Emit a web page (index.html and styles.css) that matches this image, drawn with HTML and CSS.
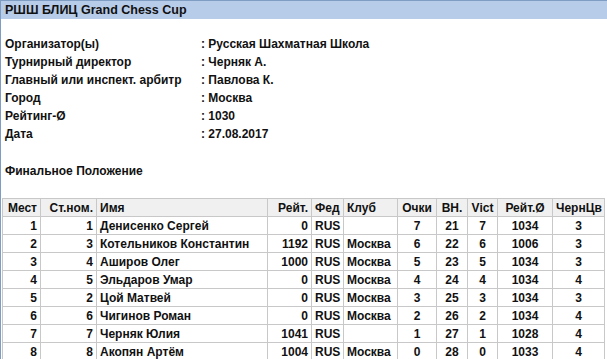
FILE: index.html
```html
<!DOCTYPE html>
<html lang="ru">
<head>
<meta charset="utf-8">
<link rel="stylesheet" href="styles.css">
</head>
<body>
<div class="page">
  <div class="titlebar">РШШ БЛИЦ Grand Chess Cup</div>
  <div class="info">
    <div class="lbl">Организатор(ы)</div><div class="val">: Русская Шахматная Школа</div>
    <div class="lbl">Турнирный директор</div><div class="val">: Черняк А.</div>
    <div class="lbl">Главный или инспект. арбитр</div><div class="val">: Павлова К.</div>
    <div class="lbl">Город</div><div class="val">: Москва</div>
    <div class="lbl">Рейтинг-Ø</div><div class="val">: 1030</div>
    <div class="lbl">Дата</div><div class="val">: 27.08.2017</div>
  </div>
  <div class="section">Финальное Положение</div>
  <table class="standings">
    <colgroup>
      <col class="c1"><col class="c2"><col class="c3"><col class="c4"><col class="c5"><col class="c6"><col class="c7"><col class="c8"><col class="c9"><col class="c10"><col class="c11">
    </colgroup>
    <thead>
      <tr><th class="r">Мест</th><th class="r">Ст.ном.</th><th class="l">Имя</th><th class="r">Рейт.</th><th class="l">Фед</th><th class="l">Клуб</th><th class="c">Очки</th><th class="c">ВН.</th><th class="c">Vict</th><th class="c">Рейт.Ø</th><th class="c">ЧернЦв</th></tr>
    </thead>
    <tbody>
      <tr><td class="r">1</td><td class="r">1</td><td class="l">Денисенко Сергей</td><td class="r">0</td><td class="l">RUS</td><td class="l"></td><td class="c">7</td><td class="c">21</td><td class="c">7</td><td class="c">1034</td><td class="c">3</td></tr>
      <tr><td class="r">2</td><td class="r">3</td><td class="l">Котельников Константин</td><td class="r">1192</td><td class="l">RUS</td><td class="l">Москва</td><td class="c">6</td><td class="c">22</td><td class="c">6</td><td class="c">1006</td><td class="c">3</td></tr>
      <tr><td class="r">3</td><td class="r">4</td><td class="l">Аширов Олег</td><td class="r">1000</td><td class="l">RUS</td><td class="l">Москва</td><td class="c">5</td><td class="c">23</td><td class="c">5</td><td class="c">1034</td><td class="c">3</td></tr>
      <tr><td class="r">4</td><td class="r">5</td><td class="l">Эльдаров Умар</td><td class="r">0</td><td class="l">RUS</td><td class="l">Москва</td><td class="c">4</td><td class="c">24</td><td class="c">4</td><td class="c">1034</td><td class="c">4</td></tr>
      <tr><td class="r">5</td><td class="r">2</td><td class="l">Цой Матвей</td><td class="r">0</td><td class="l">RUS</td><td class="l">Москва</td><td class="c">3</td><td class="c">25</td><td class="c">3</td><td class="c">1034</td><td class="c">3</td></tr>
      <tr><td class="r">6</td><td class="r">6</td><td class="l">Чигинов Роман</td><td class="r">0</td><td class="l">RUS</td><td class="l">Москва</td><td class="c">2</td><td class="c">26</td><td class="c">2</td><td class="c">1034</td><td class="c">4</td></tr>
      <tr><td class="r">7</td><td class="r">7</td><td class="l">Черняк Юлия</td><td class="r">1041</td><td class="l">RUS</td><td class="l"></td><td class="c">1</td><td class="c">27</td><td class="c">1</td><td class="c">1028</td><td class="c">4</td></tr>
      <tr><td class="r">8</td><td class="r">8</td><td class="l">Акопян Артём</td><td class="r">1004</td><td class="l">RUS</td><td class="l">Москва</td><td class="c">0</td><td class="c">28</td><td class="c">0</td><td class="c">1033</td><td class="c">4</td></tr>
    </tbody>
  </table>
</div>
</body>
</html>
```
FILE: styles.css
```css
html, body {
  margin: 0;
  padding: 0;
  background: #ffffff;
}
body {
  font-family: "Liberation Sans", Arial, sans-serif;
  font-size: 12px;
  font-weight: bold;
  color: #111111;
  overflow: hidden;
}
.page {
  border-left: 1px solid #7f9cc2;
  min-height: 359px;
  box-sizing: border-box;
}
.titlebar {
  height: 19px;
  line-height: 19px;
  background: #b7cce9;
  border-top: 1px solid #7f9cc2;
  box-sizing: border-box;
  padding-left: 4px;
  font-size: 12.5px;
}
.info {
  display: grid;
  grid-template-columns: 196px 1fr;
  grid-auto-rows: 18px;
  line-height: 18px;
  padding: 16px 0 0 4px;
}
.section {
  margin-top: 19px;
  padding-left: 4px;
  line-height: 18px;
  height: 18px;
}
.standings {
  margin: 18px 0 0 1px;
  border-collapse: collapse;
  table-layout: fixed;
  width: 603px;
}
.standings th, .standings td {
  border: 1px solid #c8c8c8;
  height: 17px;
  padding: 0 3px;
  line-height: 16px;
  white-space: nowrap;
  overflow: hidden;
  font-weight: bold;
}
.standings th {
  background: #f0f0f0;
}
.r { text-align: right; }
.l { text-align: left; }
.c { text-align: center; }
.c1 { width: 38px; }
.c2 { width: 56px; }
.c3 { width: 171px; }
.c4 { width: 44px; }
.c5 { width: 32px; }
.c6 { width: 54px; }
.c7 { width: 39px; }
.c8 { width: 31px; }
.c9 { width: 30px; }
.c10 { width: 55px; }
.c11 { width: 52px; }
```
